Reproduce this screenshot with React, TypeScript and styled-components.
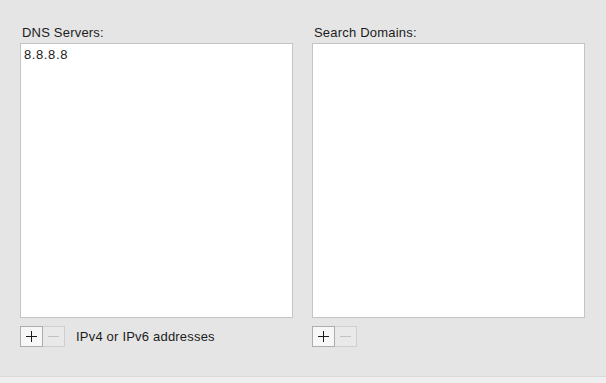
import React from 'react'
import styled, { createGlobalStyle } from 'styled-components'

const GlobalStyle = createGlobalStyle`
  html, body {
    margin: 0;
    padding: 0;
    background: #e5e5e5;
  }
  body {
    font-family: "Liberation Sans", Arial, sans-serif;
    font-size: 13px;
    color: #1c1c1c;
  }
`

const Page = styled.div`
  display: flex;
  flex-direction: column;
  width: 606px;
  height: 383px;
  background: #e5e5e5;
  overflow: hidden;
`

const Columns = styled.div`
  display: grid;
  grid-template-columns: 273px 273px;
  column-gap: 19px;
  padding: 25px 21px 0 20px;
`

const Column = styled.div`
  display: flex;
  flex-direction: column;
`

const Label = styled.div`
  font-size: 13px;
  line-height: 16px;
  letter-spacing: 0.2px;
  margin: 0 0 2px 2px;
`

const ListBox = styled.div`
  box-sizing: border-box;
  height: 275px;
  background: #ffffff;
  border: 1px solid #c4c4c4;
  padding: 3px 3px;
`

const ListItem = styled.div`
  font-size: 13px;
  line-height: 16px;
  letter-spacing: 0.6px;
`

const Footer = styled.div`
  display: flex;
  align-items: center;
  margin-top: 8px;
  height: 21px;
`

const ButtonGroup = styled.div`
  display: flex;
`

const SegButton = styled.button<{ $disabled?: boolean; $first?: boolean }>`
  box-sizing: border-box;
  width: ${p => (p.$first ? '23px' : '22px')};
  height: 21px;
  padding: 0;
  margin: 0;
  display: flex;
  align-items: center;
  justify-content: center;
  background: ${p => (p.$disabled ? '#e9e9e9' : '#f7f7f7')};
  border: 1px solid ${p => (p.$disabled ? '#cfcfcf' : '#adadad')};
  border-left: ${p => (p.$first ? undefined : 'none')};
  color: ${p => (p.$disabled ? '#c2c2c2' : '#1a1a1a')};
`

const Hint = styled.span`
  margin-left: 11px;
  font-size: 13px;
  line-height: 16px;
  letter-spacing: 0.2px;
  padding-top: 1px;
`

const BottomStrip = styled.div`
  margin-top: auto;
  height: 6px;
  border-top: 1px solid #dadada;
  background: #efefef;
`

const PlusIcon = () => (
  <svg width="11" height="11" viewBox="0 0 11 11">
    <path d="M5.5 0v11M0 5.5h11" stroke="currentColor" strokeWidth="1" />
  </svg>
)

const MinusIcon = () => (
  <svg width="11" height="11" viewBox="0 0 11 11">
    <path d="M0 5.5h11" stroke="currentColor" strokeWidth="1" />
  </svg>
)

const AddRemove = () => (
  <ButtonGroup>
    <SegButton $first>
      <PlusIcon />
    </SegButton>
    <SegButton $disabled>
      <MinusIcon />
    </SegButton>
  </ButtonGroup>
)

const dnsServers = ['8.8.8.8']
const searchDomains: string[] = []

const App = () => {
  return (
    <Page>
      <GlobalStyle />
      <Columns>
        <Column>
          <Label>DNS Servers:</Label>
          <ListBox>
            {dnsServers.map(s => (
              <ListItem key={s}>{s}</ListItem>
            ))}
          </ListBox>
          <Footer>
            <AddRemove />
            <Hint>IPv4 or IPv6 addresses</Hint>
          </Footer>
        </Column>
        <Column>
          <Label>Search Domains:</Label>
          <ListBox>
            {searchDomains.map(s => (
              <ListItem key={s}>{s}</ListItem>
            ))}
          </ListBox>
          <Footer>
            <AddRemove />
          </Footer>
        </Column>
      </Columns>
      <BottomStrip />
    </Page>
  )
}

export default App
